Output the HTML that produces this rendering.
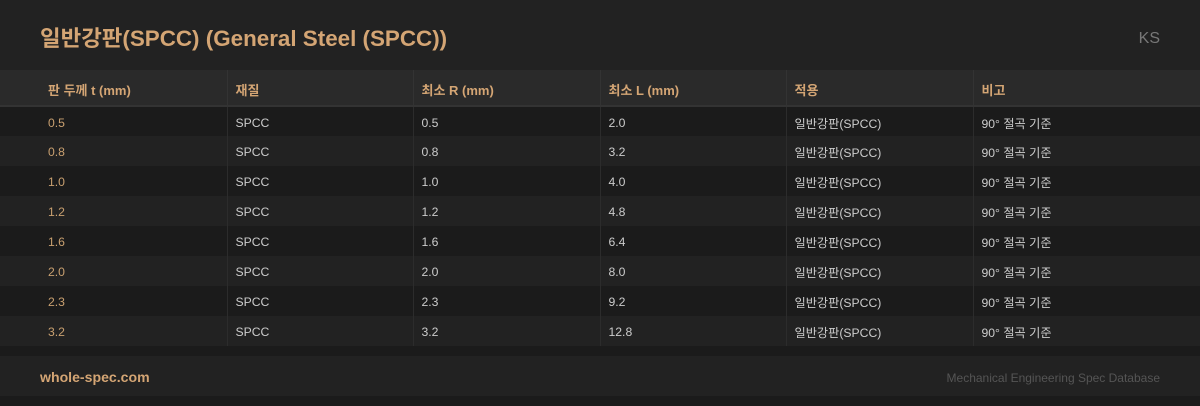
<!DOCTYPE html><html><head><meta charset="utf-8"><style>
*{margin:0;padding:0;box-sizing:border-box}
body{width:1200px;height:406px;background:#1b1b1b;font-family:"Liberation Sans","Noto Sans CJK KR",sans-serif;overflow:hidden}
.hd{height:70px;background:#222;position:relative}
.hd h1{position:absolute;left:40px;top:21px;font-size:22.4px;font-weight:bold;color:#d4a574}
.hd .ks{position:absolute;right:40px;top:30px;font-size:16px;color:#777}
table{border-collapse:collapse;width:1200px;table-layout:fixed}
th{height:36px;background:#2a2a2a;color:#d4a574;font-size:13px;text-align:left;padding-left:8px;padding-top:3px;border-bottom:2px solid #333;border-right:1px solid #333;font-weight:bold}
td{height:30px;font-size:12.2px;color:#ccc;padding-left:8px;padding-top:2px;border-right:1px solid #2c2c2c}
tr:nth-child(odd) td{background:#1b1b1b}
tr:nth-child(even) td{background:#222}
th:first-child,td:first-child{padding-left:48px}
td:first-child{color:#c9a070}
.ft{margin-top:10px;height:40px;background:#222;position:relative}
.ft .l{position:absolute;left:40px;top:13px;font-size:14.1px;font-weight:bold;color:#d4a574}
.ft .r{position:absolute;right:40px;top:15px;font-size:12px;color:#555}
</style></head><body>
<div class="hd"><h1>일반강판(SPCC) (General Steel (SPCC))</h1><div class="ks">KS</div></div>
<table><colgroup><col style="width:227px"><col style="width:186px"><col style="width:187px"><col style="width:186px"><col style="width:187px"><col style="width:227px"></colgroup>
<thead><tr><th>판 두께 t (mm)</th><th>재질</th><th>최소 R (mm)</th><th>최소 L (mm)</th><th>적용</th><th>비고</th></tr></thead>
<tbody>
<tr><td>0.5</td><td>SPCC</td><td>0.5</td><td>2.0</td><td>일반강판(SPCC)</td><td>90° 절곡 기준</td></tr>
<tr><td>0.8</td><td>SPCC</td><td>0.8</td><td>3.2</td><td>일반강판(SPCC)</td><td>90° 절곡 기준</td></tr>
<tr><td>1.0</td><td>SPCC</td><td>1.0</td><td>4.0</td><td>일반강판(SPCC)</td><td>90° 절곡 기준</td></tr>
<tr><td>1.2</td><td>SPCC</td><td>1.2</td><td>4.8</td><td>일반강판(SPCC)</td><td>90° 절곡 기준</td></tr>
<tr><td>1.6</td><td>SPCC</td><td>1.6</td><td>6.4</td><td>일반강판(SPCC)</td><td>90° 절곡 기준</td></tr>
<tr><td>2.0</td><td>SPCC</td><td>2.0</td><td>8.0</td><td>일반강판(SPCC)</td><td>90° 절곡 기준</td></tr>
<tr><td>2.3</td><td>SPCC</td><td>2.3</td><td>9.2</td><td>일반강판(SPCC)</td><td>90° 절곡 기준</td></tr>
<tr><td>3.2</td><td>SPCC</td><td>3.2</td><td>12.8</td><td>일반강판(SPCC)</td><td>90° 절곡 기준</td></tr>
</tbody></table>
<div class="ft"><div class="l">whole-spec.com</div><div class="r">Mechanical Engineering Spec Database</div></div>
</body></html>
